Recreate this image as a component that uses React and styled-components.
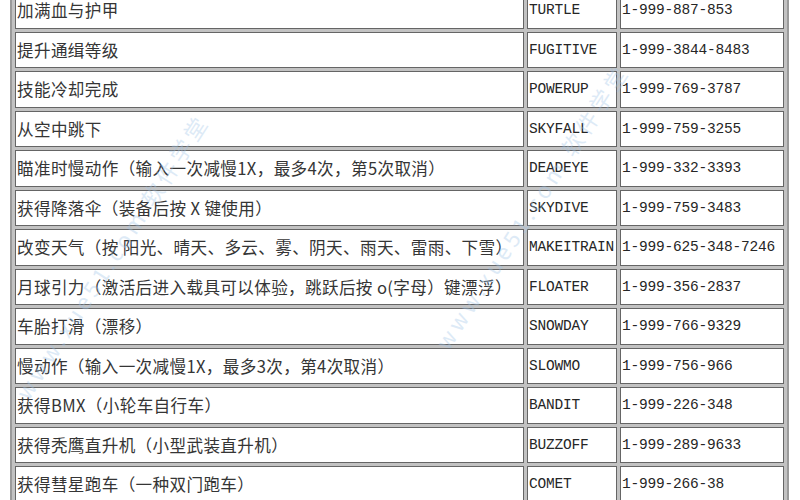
import React from "react";
import styled, { createGlobalStyle } from "styled-components";

const GlobalStyle = createGlobalStyle`
  html, body {
    margin: 0;
    padding: 0;
    background: #ffffff;
  }
`;

const Page = styled.div`
  position: relative;
  width: 800px;
  height: 500px;
  overflow: hidden;
  background: #fff;
`;

const Table = styled.div`
  display: grid;
  row-gap: 3px;
  width: fit-content;
  margin: -13px 0 0 10px;
  padding: 3px;
  border: 2px solid #9a9a9a;
  background: #c2c2c2;
`;

const Row = styled.div`
  display: grid;
  grid-template-columns: 509px 90px 164px;
  column-gap: 3px;
  height: 36.5px;
`;

const Cell = styled.div`
  display: flex;
  align-items: center;
  box-sizing: border-box;
  padding: 0 1px;
  border: 1.5px solid #656565;
  background: #fff;
  color: ${(p) => (p.$mono ? "#262626" : "#353535")};
  font-family: ${(p) =>
    p.$mono
      ? '"Liberation Mono", "Courier New", monospace'
      : '"Noto Sans CJK SC", "Liberation Sans", sans-serif'};
  font-size: ${(p) => (p.$mono ? "14.5px" : "16.6px")};
  letter-spacing: ${(p) => (p.$mono ? "-0.2px" : "0.35px")};
  white-space: nowrap;
  overflow: hidden;
`;

const Watermark = styled.div`
  position: absolute;
  left: ${(p) => p.$x}px;
  top: ${(p) => p.$y}px;
  transform: rotate(-57deg);
  transform-origin: left center;
  color: #9fc4e8;
  opacity: 0.35;
  font-family: "Noto Sans CJK SC", "Liberation Sans", sans-serif;
  font-size: 22px;
  letter-spacing: 4px;
  white-space: nowrap;
  pointer-events: none;
`;

const rows = [
  ["加满血与护甲", "TURTLE", "1-999-887-853"],
  ["提升通缉等级", "FUGITIVE", "1-999-3844-8483"],
  ["技能冷却完成", "POWERUP", "1-999-769-3787"],
  ["从空中跳下", "SKYFALL", "1-999-759-3255"],
  ["瞄准时慢动作（输入一次减慢1X，最多4次，第5次取消）", "DEADEYE", "1-999-332-3393"],
  ["获得降落伞（装备后按 X 键使用）", "SKYDIVE", "1-999-759-3483"],
  ["改变天气（按 阳光、晴天、多云、雾、阴天、雨天、雷雨、下雪）", "MAKEITRAIN", "1-999-625-348-7246"],
  ["月球引力（激活后进入载具可以体验，跳跃后按 o(字母）键漂浮）", "FLOATER", "1-999-356-2837"],
  ["车胎打滑（漂移）", "SNOWDAY", "1-999-766-9329"],
  ["慢动作（输入一次减慢1X，最多3次，第4次取消）", "SLOWMO", "1-999-756-966"],
  ["获得BMX（小轮车自行车）", "BANDIT", "1-999-226-348"],
  ["获得秃鹰直升机（小型武装直升机）", "BUZZOFF", "1-999-289-9633"],
  ["获得彗星跑车（一种双门跑车）", "COMET", "1-999-266-38"],
];

export default function App() {
  return (
    <Page>
      <GlobalStyle />
      <Table>
        {rows.map(([desc, code, phone]) => (
          <Row key={code}>
            <Cell>{desc}</Cell>
            <Cell $mono>{code}</Cell>
            <Cell $mono>{phone}</Cell>
          </Row>
        ))}
      </Table>
      <Watermark $x={20} $y={380}>www.xue51.com 软件学堂</Watermark>
      <Watermark $x={440} $y={330}>www.xue51.com 软件学堂</Watermark>
    </Page>
  );
}
